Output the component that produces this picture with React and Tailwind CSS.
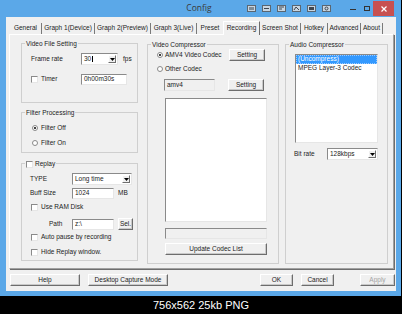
import React from "react";

// tiny win32-ish building blocks, scaled down to ~53%
function Btn({ children, className = "", disabled }) {
  return (
    <div
      className={`flex items-center justify-center border border-t-white border-l-white border-r-[#6d6d6d] border-b-[#6d6d6d] bg-[#f0f0f0] shadow-[inset_-1px_-1px_#c9c9c9] ${
        disabled ? "text-[#a3a3a3]" : ""
      } ${className}`}
    >
      {children}
    </div>
  );
}

function Field({ children, className = "", gray }) {
  return (
    <div
      className={`flex items-center border border-t-[#8a8a8a] border-l-[#8a8a8a] border-r-[#e6e6e6] border-b-[#e6e6e6] pl-[2px] ${
        gray ? "bg-[#f0f0f0]" : "bg-white"
      } ${className}`}
    >
      {children}
    </div>
  );
}

function Combo({ value, className = "", cursor }) {
  return (
    <div
      className={`flex items-stretch border border-t-[#8a8a8a] border-l-[#8a8a8a] border-r-[#e6e6e6] border-b-[#e6e6e6] bg-white p-[1px] ${className}`}
    >
      <div className="flex flex-1 items-center pl-[1px]">
        {value}
        {cursor && <span className="ml-[1px] h-[6px] w-px bg-black" />}
      </div>
      <div className="flex w-[8px] items-center justify-center border border-t-white border-l-white border-r-[#6d6d6d] border-b-[#6d6d6d] bg-[#f0f0f0]">
        <svg width="5" height="3" viewBox="0 0 5 3">
          <path d="M0 0h5L2.5 3z" fill="#000" />
        </svg>
      </div>
    </div>
  );
}

function Check() {
  return (
    <span className="h-[7px] w-[7px] shrink-0 border border-t-[#8a8a8a] border-l-[#8a8a8a] border-r-[#e6e6e6] border-b-[#e6e6e6] bg-white" />
  );
}

function Radio({ on }) {
  return (
    <span className="flex h-[6px] w-[6px] shrink-0 items-center justify-center rounded-full border border-[#8a8a8a] bg-white">
      {on && <span className="h-[2.5px] w-[2.5px] rounded-full bg-black" />}
    </span>
  );
}

function Group({ title, className = "", children }) {
  return (
    <div className={`flex flex-col border border-[#cfcfcf] ${className}`}>
      <div className="-mt-[4px] ml-[3px] flex h-[8px] w-fit items-center gap-[2px] bg-[#f0f0f0] px-[1px]">
        {title}
      </div>
      {children}
    </div>
  );
}

function TitleIcon({ kind }) {
  return (
    <svg width="9" height="7" viewBox="0 0 9 7">
      <rect x="0.5" y="0.5" width="8" height="6" fill="#c9d6e2" stroke="#5b6670" />
      {kind === 0 && <rect x="2" y="2" width="5" height="3" fill="#7d8b97" />}
      {kind === 1 && <path d="M2 3.5h5" stroke="#3d4650" />}
      {kind === 2 && <path d="M2 2h5M2 4h3" stroke="#3d4650" />}
      {kind === 3 && <path d="M2 5l2-3 3 3" stroke="#3d4650" fill="none" />}
      {kind === 4 && <rect x="2" y="2" width="5" height="3" fill="#3d4650" />}
      {kind === 5 && <circle cx="4.5" cy="3.5" r="1.5" fill="none" stroke="#3d4650" />}
    </svg>
  );
}

const tabs = [
  ["General", "w-[32px]"],
  ["Graph 1(Device)", "w-[53px]"],
  ["Graph 2(Preview)", "w-[56px]"],
  ["Graph 3(Live)", "w-[46px]"],
  ["Preset", "w-[26px]"],
  ["Recording", "w-[37px]"],
  ["Screen Shot", "w-[41px]"],
  ["Hotkey", "w-[27px]"],
  ["Advanced", "w-[33px]"],
  ["About", "w-[22px]"],
];

export default function App() {
  return (
    <div className="flex h-[314px] w-[402px] flex-col bg-black font-['Liberation_Sans',Arial,sans-serif] text-[6.5px] leading-none text-[#1b1b1b]">
      <div className="flex h-[296px] w-[401px] flex-col bg-[#5ba8e8]">
        {/* title bar */}
        <div className="flex h-[17px] items-center">
          <div className="ml-[179px] w-[40px] text-center font-['Open_Sans',sans-serif] text-[8.5px] text-[#3a3a3a]">
            Config
          </div>
          <div className="ml-[28px] flex gap-[6px]">
            {[0, 1, 2, 3, 4, 5].map((k) => (
              <TitleIcon key={k} kind={k} />
            ))}
          </div>
          <span className="ml-[19px] h-px w-[6px] translate-y-[1px] bg-[#333]" />
          <span className="ml-[8px] h-[5px] w-[6px] border border-[#333]" />
          <div className="ml-[3px] mt-[1px] flex h-[15px] w-[21px] items-center justify-center self-start bg-[#c75050]">
            <svg width="6" height="6" viewBox="0 0 6 6">
              <path d="M0.5 0.5l5 5M5.5 0.5l-5 5" stroke="#fff" strokeWidth="1.2" />
            </svg>
          </div>
        </div>

        {/* client area */}
        <div className="ml-[6px] flex h-[274px] w-[390px] flex-col bg-[#f0f0f0]">
          {/* tabs */}
          <div className="mt-[4px] flex h-[13px] items-end pl-[4px]">
            {tabs.map(([name, w]) =>
              name === "Recording" ? (
                <div
                  key={name}
                  className={`relative z-10 -mb-px flex h-[14px] items-center justify-center border border-b-0 border-t-white border-l-white border-r-[#6d6d6d] bg-[#f0f0f0] pb-[1px] ${w}`}
                >
                  {name}
                </div>
              ) : (
                <div
                  key={name}
                  className={`flex h-[11px] items-center justify-center ${
                    name === "Preset" ? "" : "border-r border-[#7a7a7a]"
                  } ${w}`}
                >
                  {name}
                </div>
              )
            )}
          </div>

          {/* tab page */}
          <div className="ml-[3px] flex h-[235px] w-[385px] items-start border border-t-white border-l-white border-r-[#a0a0a0] border-b-[#a0a0a0] pl-[11px] pt-[8px] shadow-[1px_1px_#6d6d6d]">
            {/* left column */}
            <div className="flex w-[117px] flex-col">
              <Group title="Video File Setting" className="h-[60px]">
                <div className="mt-[5px] flex h-[12px] items-center pl-[9px]">
                  <span className="w-[50px]">Frame rate</span>
                  <Combo value="30" cursor className="h-[12px] w-[37px]" />
                  <span className="ml-[5px]">fps</span>
                </div>
                <div className="mt-[9px] flex h-[11px] items-center pl-[9px]">
                  <Check />
                  <span className="ml-[3px] w-[40px]">Timer</span>
                  <Field className="h-[11px] w-[46px]">0h00m30s</Field>
                </div>
              </Group>

              <Group title="Filter Processing" className="mt-[9px] h-[41px]">
                <div className="mt-[6px] flex h-[10px] items-center pl-[10px]">
                  <Radio on />
                  <span className="ml-[3px]">Filter Off</span>
                </div>
                <div className="mt-[5px] flex h-[10px] items-center pl-[10px]">
                  <Radio />
                  <span className="ml-[3px]">Filter On</span>
                </div>
              </Group>

              <Group
                title={
                  <>
                    <Check />
                    <span>Replay</span>
                  </>
                }
                className="mt-[10px] h-[98px]"
              >
                <div className="mt-[5px] flex h-[12px] items-center pl-[8px]">
                  <span className="w-[42px]">TYPE</span>
                  <Combo value="Long time" className="h-[12px] w-[60px]" />
                </div>
                <div className="mt-[3px] flex h-[11px] items-center pl-[8px]">
                  <span className="w-[42px]">Buff Size</span>
                  <Field className="h-[11px] w-[42px]">1024</Field>
                  <span className="ml-[4px]">MB</span>
                </div>
                <div className="mt-[3px] flex h-[10px] items-center pl-[9px]">
                  <Check />
                  <span className="ml-[3px]">Use RAM Disk</span>
                </div>
                <div className="mt-[6px] flex h-[12px] items-center pl-[27px]">
                  <span className="w-[23px]">Path</span>
                  <Field className="h-[11px] w-[42px]">z:\</Field>
                  <Btn className="ml-[4px] h-[12px] w-[15px]">Sel.</Btn>
                </div>
                <div className="mt-[2px] flex h-[10px] items-center pl-[9px]">
                  <Check />
                  <span className="ml-[3px]">Auto pause by recording</span>
                </div>
                <div className="mt-[5px] flex h-[10px] items-center pl-[9px]">
                  <Check />
                  <span className="ml-[3px]">Hide Replay window.</span>
                </div>
              </Group>
            </div>

            {/* video compressor */}
            <Group title="Video Compressor" className="ml-[9px] mt-px h-[220px] w-[132px]">
              <div className="flex h-[12px] items-center pl-[9px]">
                <Radio on />
                <span className="ml-[2px] w-[64px]">AMV4 Video Codec</span>
                <Btn className="h-[12px] w-[36px]">Setting</Btn>
              </div>
              <div className="mt-[3px] flex h-[10px] items-center pl-[9px]">
                <Radio />
                <span className="ml-[2px]">Other Codec</span>
              </div>
              <div className="mt-[5px] flex h-[12px] items-center pl-[16px]">
                <Field gray className="h-[12px] w-[51px]">
                  amv4
                </Field>
                <Btn className="ml-[13px] h-[12px] w-[36px]">Setting</Btn>
              </div>
              <div className="ml-[17px] mt-[7px] h-[124px] w-[102px] border border-t-[#8a8a8a] border-l-[#8a8a8a] border-r-[#e6e6e6] border-b-[#e6e6e6] bg-white" />
              <Field gray className="ml-[17px] mt-[6px] h-[11px] w-[102px]" />
              <Btn className="ml-[17px] mt-[4px] h-[12px] w-[102px]">Update Codec List</Btn>
            </Group>

            {/* audio compressor */}
            <Group title="Audio Compressor" className="ml-[6px] mt-px h-[220px] w-[103px]">
              <div className="ml-[9px] mt-[5px] flex h-[89px] w-[83px] flex-col border border-t-[#8a8a8a] border-l-[#8a8a8a] border-r-[#e6e6e6] border-b-[#e6e6e6] bg-white">
                <div className="flex h-[9px] items-center border border-dotted border-[#9ccaff] bg-[#3399ff] pl-[1px] text-white">
                  (Uncompress)
                </div>
                <div className="flex h-[9px] items-center pl-[2px]">MPEG Layer-3 Codec</div>
              </div>
              <div className="mt-[5px] flex h-[12px] items-center pl-[8px]">
                <span className="w-[33px]">Bit rate</span>
                <Combo value="128kbps" className="h-[12px] w-[51px]" />
              </div>
            </Group>
          </div>

          {/* dialog buttons */}
          <div className="mt-[5px] flex h-[12px]">
            <Btn className="ml-[4px] w-[70px]">Help</Btn>
            <Btn className="ml-[8px] w-[80px]">Desktop Capture Mode</Btn>
            <Btn className="ml-[92px] w-[33px]">OK</Btn>
            <Btn className="ml-[8px] w-[33px]">Cancel</Btn>
            <Btn disabled className="ml-[26px] w-[35px]">
              Apply
            </Btn>
          </div>
        </div>
      </div>
      <div className="flex flex-1 items-center justify-center text-[11px] text-white">756x562 25kb PNG</div>
    </div>
  );
}
